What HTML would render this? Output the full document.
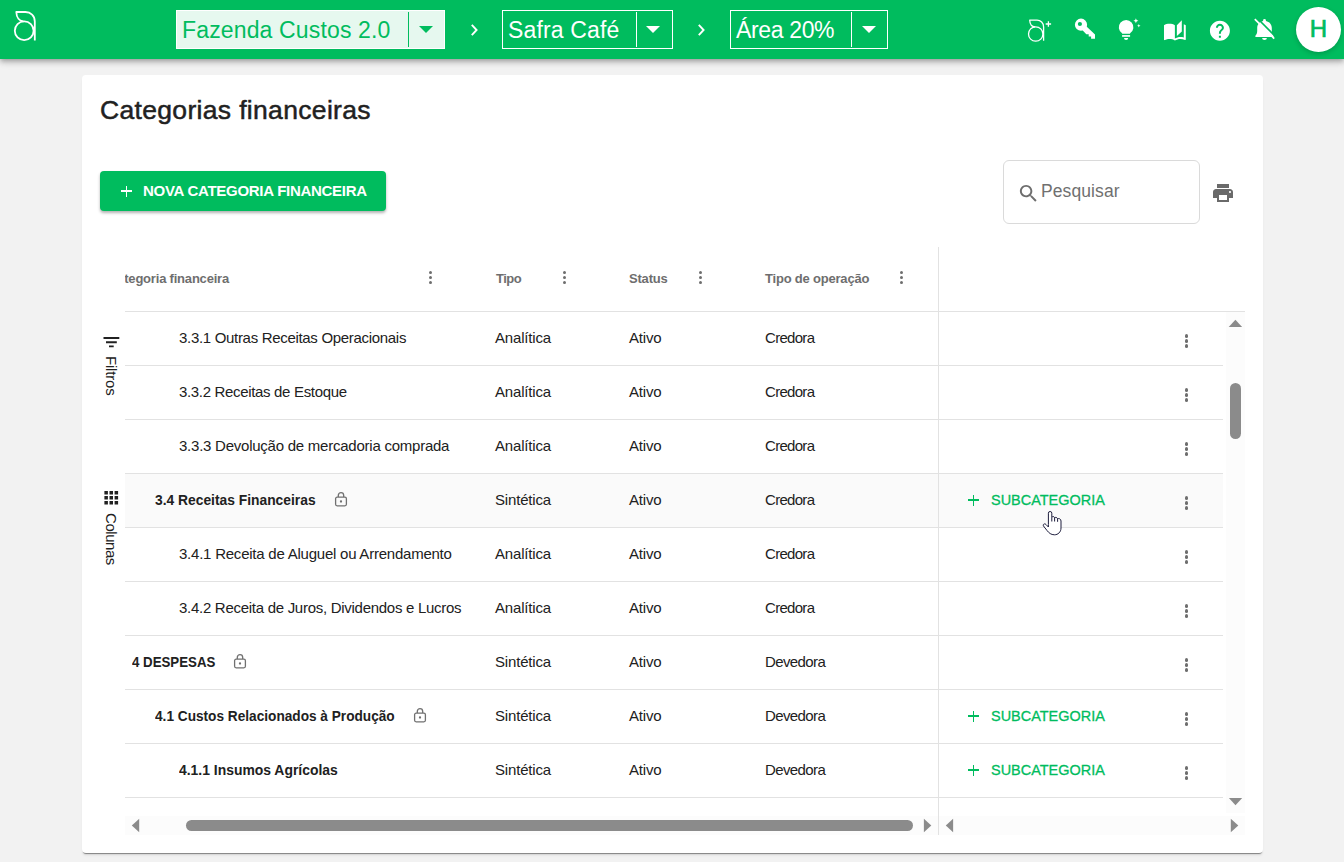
<!DOCTYPE html>
<html lang="pt-BR">
<head>
<meta charset="utf-8">
<title>Categorias financeiras</title>
<style>
*{box-sizing:border-box;margin:0;padding:0}
html,body{width:1344px;height:862px;overflow:hidden}
body{background:#f2f2f2;font-family:"Liberation Sans",sans-serif;color:#212121;position:relative}
#topbar{position:absolute;left:0;top:0;width:1344px;height:59px;background:#00bc5e;box-shadow:0 2px 4px -1px rgba(0,0,0,.2),0 4px 5px 0 rgba(0,0,0,.14),0 1px 10px 0 rgba(0,0,0,.12);z-index:5}
.sel{position:absolute;top:10px;height:39px;border:1px solid #fff;color:#fff;font-size:23px;line-height:38px;white-space:nowrap;letter-spacing:.15px}
.sel .t{position:absolute;left:5px;top:0}
.sel .dv{position:absolute;top:1px;bottom:1px;width:1px;background:#fff}
.sel .ar{position:absolute;top:15px;width:0;height:0;border-left:7.25px solid transparent;border-right:7.25px solid transparent;border-top:7.5px solid #fff}
.sel.on{background:#e6f8ef;color:#00bc5e}
.sel.on .dv{background:#00bc5e}
.sel.on .ar{border-top-color:#00bc5e}
#icons{position:absolute;left:0;top:0;width:1344px;height:59px}
#avatar{position:absolute;left:1296px;top:7px;width:45px;height:45px;border-radius:50%;background:#fff;color:#00bc5e;font-size:24px;line-height:43px;text-align:center;-webkit-text-stroke:.7px #00bc5e;box-shadow:0 2px 5px rgba(0,0,0,.18)}
#card{position:absolute;left:82px;top:75px;width:1181px;height:778px;background:#fff;border-radius:4px;box-shadow:0 2px 1px -1px rgba(0,0,0,.42),0 3px 3px -1.5px rgba(0,0,0,.1)}
h1{position:absolute;left:100px;top:93px;font-size:26.5px;line-height:34px;font-weight:400;letter-spacing:.33px;-webkit-text-stroke:.5px #212121;color:#212121;white-space:nowrap}
#newbtn{position:absolute;left:100px;top:171px;width:286px;height:40px;background:#00bc5e;border-radius:4px;color:#fff;font-weight:700;font-size:15px;line-height:40px;white-space:nowrap;letter-spacing:-.28px;box-shadow:0 2px 3px rgba(0,0,0,.3)}
#search{position:absolute;left:1003px;top:160px;width:197px;height:64px;border:1px solid #dadada;border-radius:6px;background:#fff}
#search span{position:absolute;left:37px;top:19px;font-size:17.5px;line-height:22px;color:#707070;letter-spacing:.1px}
.hline{position:absolute;height:1px;background:#e2e2e2}
.vline{position:absolute;width:1px;background:#e2e2e2}
.hd{position:absolute;top:271px;font-size:13px;line-height:16px;font-weight:700;color:#6e6e6e;white-space:nowrap;letter-spacing:-.2px}
.row{position:absolute;left:125px;width:1098px;height:54px}
.row.hov{background:#fafafa}
.c{position:absolute;top:17px;font-size:15px;line-height:18px;white-space:nowrap;color:#212121;letter-spacing:-.3px}
.c.b{font-weight:700;letter-spacing:0;transform-origin:0 50%}
.lock{position:absolute;top:17px}
.plus{position:absolute;top:20.5px;width:11px;height:11px}
.plus:before,.plus:after{content:"";position:absolute;background:#00bc5e}
.plus:before{left:0;top:4.75px;width:11px;height:1.5px}
.plus:after{left:4.75px;top:0;width:1.5px;height:11px}
.sub{position:absolute;left:866px;top:16.7px;font-size:15px;line-height:18px;color:#00bc5e;white-space:nowrap;letter-spacing:0;transform:scaleX(.964);transform-origin:0 50%;-webkit-text-stroke:.3px #00bc5e}
.dots{position:absolute;width:3px}
.dots i{display:block;width:3.2px;height:3.2px;border-radius:50%;background:#6e6e6e;margin-bottom:1.8px}
.side{position:absolute;writing-mode:vertical-rl;font-size:15px;line-height:18px;color:#212121;white-space:nowrap}
.trk{position:absolute;background:#fcfcfc}
.thumb{position:absolute;background:#8b8b8b;border-radius:6px}
.tri{position:absolute;width:0;height:0}
</style>
</head>
<body>
<div id="topbar">
  <div class="sel on" style="left:176px;width:269px"><span class="t">Fazenda Custos 2.0</span><span class="dv" style="left:231px"></span><span class="ar" style="left:241.5px"></span></div>
  <div class="sel" style="left:502px;width:171px"><span class="t">Safra Café</span><span class="dv" style="left:133px"></span><span class="ar" style="left:143px"></span></div>
  <div class="sel" style="left:730px;width:158px"><span class="t" style="letter-spacing:-.35px">Área 20%</span><span class="dv" style="left:120px"></span><span class="ar" style="left:131px"></span></div>
  <svg id="icons" viewBox="0 0 1344 59">
    <!-- logo -->
    <g fill="none" stroke="#fff" stroke-width="1.8" stroke-linejoin="round">
      <circle cx="24.2" cy="30.7" r="9.4"/>
      <path d="M34.800 40.500V21.500C34.800 15.600 30.600 12 25.500 12H16.300C16.500 17.500 19.500 21.100 23.400 21.300"/>
    </g>
    <!-- chevrons -->
    <path d="M471.8 24.8L476.6 30L471.8 35.2M698.8 24.8L703.6 30L698.8 35.2" fill="none" stroke="#fff" stroke-width="1.9"/>
    <!-- a+ -->
    <g fill="none" stroke="#fff" stroke-width="1.3" stroke-linejoin="round">
      <circle cx="1035.700" cy="34" r="7.200"/>
      <path d="M1043.600 40.800V27C1043.600 22.800 1040.600 20.200 1037 20.200H1029.700C1029.900 24.200 1032.200 26.700 1035.100 26.850"/>
      <path d="M1045.700 24H1051.100M1048.400 21.300V26.700" stroke-width="1.300"/>
    </g>
    <!-- key -->
    <g fill="#fff">
      <path fill-rule="evenodd" d="M1081 18.6a6.1 6.1 0 1 0 0 12.2a6.1 6.1 0 1 0 0-12.2zM1079.9 21.9a2.1 2.1 0 1 1 0 4.2a2.1 2.1 0 1 1 0-4.2z"/>
      <path d="M1085.2 25.2L1095 34.6V38.7H1091.1V36.6H1088.7V34.2H1086.3L1082.5 30.3Z"/>
    </g>
    <!-- bulb -->
    <g fill="#fff">
      <path d="M1122.100 33.800V33.300A7.300 7.300 0 1 1 1130.100 33.300V33.800Z"/>
      <rect x="1122.1" y="35.1" width="8" height="1.7"/>
      <path d="M1124 38H1128.2A2.1 1.9 0 0 1 1124 38Z"/>
      <path d="M1135.9 18.3L1136.6 20.1L1138.4 20.8L1136.6 21.5L1135.9 23.3L1135.2 21.5L1133.4 20.8L1135.2 20.1Z"/>
      <path d="M1138.8 24L1139.3 25.2L1140.5 25.7L1139.3 26.2L1138.8 27.4L1138.3 26.2L1137.1 25.7L1138.3 25.2Z"/>
    </g>
    <!-- book -->
    <g transform="translate(1163 19.2) scale(.99)" fill="#fff">
      <path d="M19 1l-5 5v11l5-4.500V1zM1 6v14.650c0 .250.250.500.500.500.100 0 .150-.050.250-.050C3.100 20.450 5.050 20 6.500 20c1.950 0 4.050.400 5.500 1.500V6c-1.450-1.100-3.550-1.500-5.500-1.500S2.450 4.900 1 6zm22 13.500V6c-.600-.450-1.250-.750-2-1v13.500c-1.100-.350-2.300-.500-3.500-.500-1.700 0-4.150.650-5.500 1.500v2c1.350-.850 3.800-1.500 5.500-1.500 1.650 0 3.350.300 4.750 1.050.100.050.150.050.250.050.250 0 .500-.250.500-.500v-1.100z"/>
    </g>
    <!-- help -->
    <g transform="translate(1207.9 18.7)" fill="#fff">
      <path d="M12 2C6.480 2 2 6.480 2 12s4.480 10 10 10 10-4.480 10-10S17.520 2 12 2zm1 17h-2v-2h2v2zm2.070-7.750l-.900.920C13.450 12.900 13 13.500 13 15h-2v-.500c0-1.100.450-2.100 1.170-2.830l1.240-1.260c.370-.360.590-.860.590-1.410 0-1.100-.900-2-2-2s-2 .900-2 2H8c0-2.210 1.790-4 4-4s4 1.790 4 4c0 .880-.360 1.680-.930 2.250z"/>
    </g>
    <!-- bell off -->
    <g>
      <path fill="#fff" d="M1264.500 18.900a1.400 1.400 0 0 1 1.400 1.400v.700c3.600.800 5.900 3.400 5.900 7v3c0 1.900.500 3.300 1.600 4.500.600.600.200 1.600-.700 1.600h-16.400c-.900 0-1.300-1-.700-1.600 1.100-1.200 1.600-2.600 1.600-4.500v-3c0-3.600 2.300-6.200 5.900-7v-.700a1.400 1.400 0 0 1 1.400-1.400zM1262.100 38.100h4.800a2.400 2 0 0 1-4.800 0z"/>
      <path d="M1256.800 17.800L1276.200 37.200" stroke="#00bc5e" stroke-width="1.600" fill="none"/>
      <path d="M1254.800 19.200L1274.200 38.600" stroke="#fff" stroke-width="1.700" fill="none"/>
    </g>
  </svg>
  <div id="avatar">H</div>
</div>
<div id="card"></div>
<h1>Categorias financeiras</h1>
<div id="newbtn"><span style="position:absolute;left:21px;top:19.2px;width:11px;height:1.6px;background:#fff"></span><span style="position:absolute;left:25.7px;top:14.5px;width:1.6px;height:11px;background:#fff"></span><span style="position:absolute;left:43px">NOVA CATEGORIA FINANCEIRA</span></div>
<div id="search"><span>Pesquisar</span></div>
<div id="table">
<div class="hd" style="left:125px;width:300px;overflow:hidden"><span style="display:block;margin-left:-17px">Categoria financeira</span></div>
<div class="hd" style="left:496px;letter-spacing:-.5px">Tipo</div>
<div class="hd" style="left:629px">Status</div>
<div class="hd" style="left:765px">Tipo de operação</div>
<div class="dots" style="left:429px;top:271px"><i></i><i></i><i></i></div>
<div class="dots" style="left:563px;top:271px"><i></i><i></i><i></i></div>
<div class="dots" style="left:699px;top:271px"><i></i><i></i><i></i></div>
<div class="dots" style="left:900px;top:271px"><i></i><i></i><i></i></div>
<div class="hline" style="left:125px;top:311px;width:1120px"></div>
<div class="row" style="top:312px"><span class="c" style="left:54px;letter-spacing:-0.31px">3.3.1 Outras Receitas Operacionais</span><span class="c" style="left:370px;letter-spacing:-.17px">Analítica</span><span class="c" style="left:504px;letter-spacing:-.2px">Ativo</span><span class="c" style="left:640px;letter-spacing:-.7px">Credora</span><span class="dots sm" style="left:1060px;top:22.4px"><i></i><i></i><i></i></span></div>
<div class="hline" style="left:125px;top:365px;width:1098px"></div>
<div class="row" style="top:366px"><span class="c" style="left:54px;letter-spacing:-0.33px">3.3.2 Receitas de Estoque</span><span class="c" style="left:370px;letter-spacing:-.17px">Analítica</span><span class="c" style="left:504px;letter-spacing:-.2px">Ativo</span><span class="c" style="left:640px;letter-spacing:-.7px">Credora</span><span class="dots sm" style="left:1060px;top:22.4px"><i></i><i></i><i></i></span></div>
<div class="hline" style="left:125px;top:419px;width:1098px"></div>
<div class="row" style="top:420px"><span class="c" style="left:54px;letter-spacing:-0.24px">3.3.3 Devolução de mercadoria comprada</span><span class="c" style="left:370px;letter-spacing:-.17px">Analítica</span><span class="c" style="left:504px;letter-spacing:-.2px">Ativo</span><span class="c" style="left:640px;letter-spacing:-.7px">Credora</span><span class="dots sm" style="left:1060px;top:22.4px"><i></i><i></i><i></i></span></div>
<div class="hline" style="left:125px;top:473px;width:1098px"></div>
<div class="row hov" style="top:474px"><span class="c b" style="left:30px;transform:scaleX(0.9214)">3.4 Receitas Financeiras</span><svg class="lock" style="left:209px" width="14" height="16" viewBox="0 0 14 16"><rect x="1.600" y="6.200" width="10.800" height="8.600" rx="1.500" fill="none" stroke="#707070" stroke-width="1.300"/><path d="M4.300 6V4.400a2.700 2.700 0 0 1 5.400 0V6" fill="none" stroke="#707070" stroke-width="1.300"/><circle cx="7" cy="10.500" r="1.150" fill="#707070"/></svg><span class="c" style="left:370px;letter-spacing:-.17px">Sintética</span><span class="c" style="left:504px;letter-spacing:-.2px">Ativo</span><span class="c" style="left:640px;letter-spacing:-.7px">Credora</span><span class="plus" style="left:843px"></span><span class="sub">SUBCATEGORIA</span><span class="dots sm" style="left:1060px;top:22.4px"><i></i><i></i><i></i></span></div>
<div class="hline" style="left:125px;top:527px;width:1098px"></div>
<div class="row" style="top:528px"><span class="c" style="left:54px;letter-spacing:-0.23px">3.4.1 Receita de Aluguel ou Arrendamento</span><span class="c" style="left:370px;letter-spacing:-.17px">Analítica</span><span class="c" style="left:504px;letter-spacing:-.2px">Ativo</span><span class="c" style="left:640px;letter-spacing:-.7px">Credora</span><span class="dots sm" style="left:1060px;top:22.4px"><i></i><i></i><i></i></span></div>
<div class="hline" style="left:125px;top:581px;width:1098px"></div>
<div class="row" style="top:582px"><span class="c" style="left:54px;letter-spacing:-0.28px">3.4.2 Receita de Juros, Dividendos e Lucros</span><span class="c" style="left:370px;letter-spacing:-.17px">Analítica</span><span class="c" style="left:504px;letter-spacing:-.2px">Ativo</span><span class="c" style="left:640px;letter-spacing:-.7px">Credora</span><span class="dots sm" style="left:1060px;top:22.4px"><i></i><i></i><i></i></span></div>
<div class="hline" style="left:125px;top:635px;width:1098px"></div>
<div class="row" style="top:636px"><span class="c b" style="left:7px;transform:scaleX(0.8843)">4 DESPESAS</span><svg class="lock" style="left:108px" width="14" height="16" viewBox="0 0 14 16"><rect x="1.600" y="6.200" width="10.800" height="8.600" rx="1.500" fill="none" stroke="#707070" stroke-width="1.300"/><path d="M4.300 6V4.400a2.700 2.700 0 0 1 5.400 0V6" fill="none" stroke="#707070" stroke-width="1.300"/><circle cx="7" cy="10.500" r="1.150" fill="#707070"/></svg><span class="c" style="left:370px;letter-spacing:-.17px">Sintética</span><span class="c" style="left:504px;letter-spacing:-.2px">Ativo</span><span class="c" style="left:640px;letter-spacing:-.61px">Devedora</span><span class="dots sm" style="left:1060px;top:22.4px"><i></i><i></i><i></i></span></div>
<div class="hline" style="left:125px;top:689px;width:1098px"></div>
<div class="row" style="top:690px"><span class="c b" style="left:30px;transform:scaleX(0.9100)">4.1 Custos Relacionados à Produção</span><svg class="lock" style="left:288px" width="14" height="16" viewBox="0 0 14 16"><rect x="1.600" y="6.200" width="10.800" height="8.600" rx="1.500" fill="none" stroke="#707070" stroke-width="1.300"/><path d="M4.300 6V4.400a2.700 2.700 0 0 1 5.400 0V6" fill="none" stroke="#707070" stroke-width="1.300"/><circle cx="7" cy="10.500" r="1.150" fill="#707070"/></svg><span class="c" style="left:370px;letter-spacing:-.17px">Sintética</span><span class="c" style="left:504px;letter-spacing:-.2px">Ativo</span><span class="c" style="left:640px;letter-spacing:-.61px">Devedora</span><span class="plus" style="left:843px"></span><span class="sub">SUBCATEGORIA</span><span class="dots sm" style="left:1060px;top:22.4px"><i></i><i></i><i></i></span></div>
<div class="hline" style="left:125px;top:743px;width:1098px"></div>
<div class="row" style="top:744px"><span class="c b" style="left:54px;transform:scaleX(0.9276)">4.1.1 Insumos Agrícolas</span><span class="c" style="left:370px;letter-spacing:-.17px">Sintética</span><span class="c" style="left:504px;letter-spacing:-.2px">Ativo</span><span class="c" style="left:640px;letter-spacing:-.61px">Devedora</span><span class="plus" style="left:843px"></span><span class="sub">SUBCATEGORIA</span><span class="dots sm" style="left:1060px;top:22.4px"><i></i><i></i><i></i></span></div>
<div class="hline" style="left:125px;top:797px;width:1098px"></div>
<div class="vline" style="left:938px;top:247px;height:588px"></div>
</div><!--endtable-->
<!--extras-->
<svg style="position:absolute;left:1017px;top:182px" width="23" height="23" viewBox="0 0 24 24"><path fill="#6e6e6e" d="M15.500 14h-.790l-.280-.270C15.410 12.590 16 11.110 16 9.500 16 5.910 13.090 3 9.500 3S3 5.910 3 9.500 5.910 16 9.500 16c1.610 0 3.090-.590 4.230-1.570l.270.280v.790l5 4.990L20.490 19l-4.990-5zm-6 0C7.010 14 5 11.990 5 9.500S7.010 5 9.500 5 14 7.010 14 9.500 11.990 14 9.500 14z"/></svg>
<svg style="position:absolute;left:1211px;top:181px" width="24" height="24" viewBox="0 0 24 24"><path fill="#6a6a6a" d="M19 8H5c-1.660 0-3 1.340-3 3v6h4v4h12v-4h4v-6c0-1.660-1.340-3-3-3zm-3 11H8v-5h8v5zm3-7c-.550 0-1-.450-1-1s.450-1 1-1 1 .450 1 1-.450 1-1 1zm-1-9H6v4h12V3z"/></svg>
<!-- sidebar -->
<svg style="position:absolute;left:103px;top:336px" width="17" height="12" viewBox="0 0 17 12"><path fill="#212121" d="M.5.900h15.800v2H.5zM3 5.200h10.800v2H3zM6 9.400h4.700v1.900H6z"/></svg>
<div class="side" style="left:102px;top:356px;letter-spacing:-.2px">Filtros</div>
<svg style="position:absolute;left:104px;top:491px" width="15" height="14" viewBox="0 0 15 14"><g fill="#212121"><rect x=".4" y="0" width="3.500" height="3.500"/><rect x="5.500" y="0" width="3.500" height="3.500"/><rect x="10.600" y="0" width="3.500" height="3.500"/><rect x=".4" y="5" width="3.500" height="3.500"/><rect x="5.500" y="5" width="3.500" height="3.500"/><rect x="10.600" y="5" width="3.500" height="3.500"/><rect x=".4" y="10" width="3.500" height="3.500"/><rect x="5.500" y="10" width="3.500" height="3.500"/><rect x="10.600" y="10" width="3.500" height="3.500"/></g></svg>
<div class="side" style="left:102px;top:512.500px;letter-spacing:-.45px">Colunas</div>
<!-- scrollbars -->
<div class="trk" style="left:1226px;top:312px;width:19px;height:501px"></div>
<div class="trk" style="left:125px;top:816px;width:813px;height:19px"></div>
<div class="trk" style="left:939px;top:816px;width:306px;height:19px"></div>
<div class="thumb" style="left:1230px;top:383px;width:11px;height:56px"></div>
<div class="thumb" style="left:186px;top:820px;width:727px;height:11px"></div>
<svg style="position:absolute;left:0;top:0;pointer-events:none" width="1344" height="862" viewBox="0 0 1344 862"><g fill="#8b8b8b">
<path d="M1228.700 327L1235.400 319.700L1242.100 327Z"/>
<path d="M1228.900 798L1242.200 798L1235.500 805.200Z"/>
<path d="M139.200 818.800V832.200L131.800 825.500Z"/>
<path d="M923.900 818.800V832.200L931.300 825.500Z"/>
<path d="M953.100 818.800V832.200L945.800 825.500Z"/>
<path d="M1230.800 818.800V832.200L1238.300 825.500Z"/>
</g>
<!-- cursor -->
<g transform="translate(1040 508)">
<path d="M8.400 16.500V5.200A1.700 1.700 0 0 1 11.800 5.200V9.300C12.500 8.300 14 8.300 14.600 9.500C15.200 9.300 17 9.300 17.600 10.600C18.500 10.300 21 10.600 21 13V20C21 24 18 26.800 14.500 26.800C11 26.800 9 25 7 22.500L3.500 18C2.500 16.500 4.500 15 6 16.500L8.400 19Z" fill="#fff" stroke="#1c1c3c" stroke-width="1" stroke-linejoin="round"/>
<path d="M11.800 9.300V13.500M14.600 9.500V13.500M17.600 10.600V13.800" stroke="#1c1c3c" stroke-width="1" fill="none"/>
</g>
</svg>
<!--endextras-->
</body>
</html>
